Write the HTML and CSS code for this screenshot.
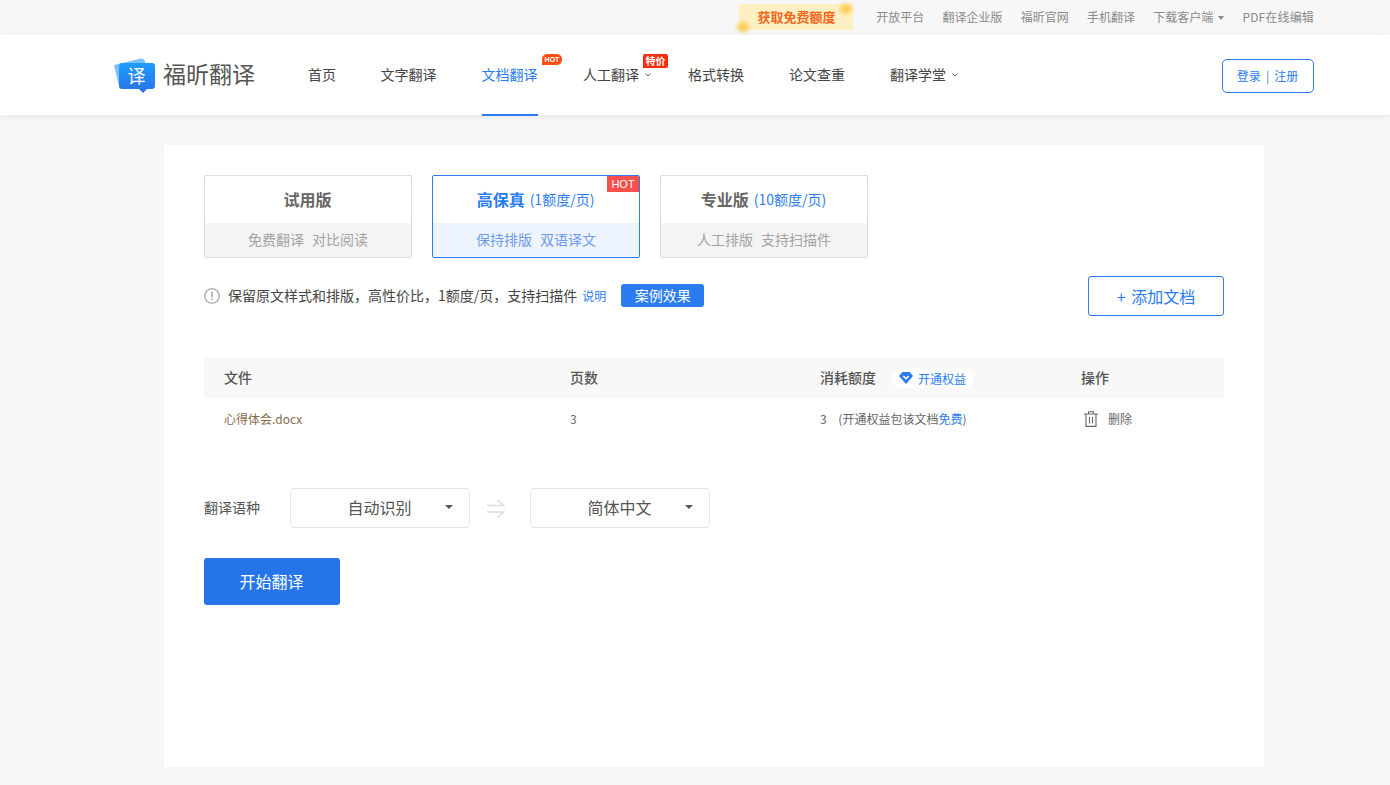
FILE: index.html
```html
<!DOCTYPE html>
<html lang="zh-CN">
<head>
<meta charset="utf-8">
<title>福昕翻译</title>
<link rel="stylesheet" href="styles.css">
</head>
<body>
<div class="topbar">
  <div class="promo"><span class="blob blob-a"></span><span class="blob blob-b"></span><span class="promo-text">获取免费额度</span></div>
  <a class="toplink">开放平台</a>
  <a class="toplink">翻译企业版</a>
  <a class="toplink">福昕官网</a>
  <a class="toplink">手机翻译</a>
  <a class="toplink">下载客户端<i class="caret-small"></i></a>
  <a class="toplink pdf">PDF在线编辑</a>
</div>
<header class="header">
  <div class="logo">
    <svg class="logo-icon" width="44" height="36" viewBox="0 0 44 36">
      <defs><linearGradient id="lg" x1="0" y1="0" x2="0" y2="1"><stop offset="0" stop-color="#1f9bfb"/><stop offset="1" stop-color="#2a72ea"/></linearGradient></defs>
      <path d="M1 8 L28 1.500 Q31 1 32 4 L34 24 L9 30 Q6 30.500 5.500 27 Z" fill="#7cc0fb"/>
      <path d="M9 6 H39 Q42 6 42 9 V29 Q42 32 39 32 H34 L30 36 L26 32 H9 Q6 32 6 29 V9 Q6 6 9 6 Z" fill="url(#lg)"/>
      <text x="23.500" y="25.500" text-anchor="middle" class="logo-char">译</text>
    </svg>
    <span class="logo-text">福昕翻译</span>
  </div>
  <nav class="nav">
    <a class="nav-item first">首页</a>
    <a class="nav-item">文字翻译</a>
    <a class="nav-item active">文档翻译<span class="tag tag-hot">HOT</span></a>
    <a class="nav-item has-arrow">人工翻译<span class="tag tag-sale">特价</span><svg class="chev" width="6" height="4" viewBox="0 0 6 4"><path d="M.5.5 3 3 5.500.5" fill="none" stroke="#555" stroke-width=".9"/></svg></a>
    <a class="nav-item">格式转换</a>
    <a class="nav-item">论文查重</a>
    <a class="nav-item has-arrow">翻译学堂<svg class="chev" width="6" height="4" viewBox="0 0 6 4"><path d="M.5.5 3 3 5.500.5" fill="none" stroke="#555" stroke-width=".9"/></svg></a>
  </nav>
  <button class="login">登录<span class="login-sep">|</span>注册</button>
</header>
<main class="card">
  <div class="plans">
    <div class="plan">
      <div class="plan-head"><b>试用版</b></div>
      <div class="plan-foot"><span>免费翻译</span><span>对比阅读</span></div>
    </div>
    <div class="plan selected">
      <div class="plan-head"><b>高保真</b><em>(1额度/页)</em></div>
      <div class="plan-foot"><span>保持排版</span><span>双语译文</span></div>
      <span class="plan-hot">HOT</span>
    </div>
    <div class="plan">
      <div class="plan-head"><b>专业版</b><em>(10额度/页)</em></div>
      <div class="plan-foot"><span>人工排版</span><span>支持扫描件</span></div>
    </div>
  </div>
  <div class="info-row">
    <div class="info">
      <svg class="info-icon" width="16" height="16" viewBox="0 0 16 16"><circle cx="8" cy="8" r="7.300" fill="none" stroke="#999" stroke-width="1.100"/><path d="M8 3.800V9.200M8 10.600V12" stroke="#999" stroke-width="1.400" fill="none"/></svg>
      <span class="info-text">保留原文样式和排版，高性价比，1额度/页，支持扫描件</span>
      <a class="info-link">说明</a>
      <span class="case-btn">案例效果</span>
    </div>
    <button class="add-btn">+ 添加文档</button>
  </div>
  <div class="table">
    <div class="tr thead">
      <div>文件</div>
      <div>页数</div>
      <div class="cost-head">消耗额度<span class="perk"><svg width="14" height="12" viewBox="0 0 14 12"><path d="M3.300 0H10.700L14 4 7 12 0 4Z" fill="#2a7cf0"/><path d="M4.300 4 7 6.600 9.700 4" fill="none" stroke="#fff" stroke-width="1.500"/></svg>开通权益</span></div>
      <div>操作</div>
    </div>
    <div class="tr tbody">
      <div class="filename">心得体会.docx</div>
      <div>3</div>
      <div>3 <span class="note">(开通权益包该文档<span class="blue">免费</span>)</span></div>
      <div class="op"><svg class="trash" width="14" height="16" viewBox="0 0 14 16"><path d="M0 3H14M4.500 3V.7H9.500V3M2 3V15.400H12V3M5.500 6V12.500M8.500 6V12.500" fill="none" stroke="#666" stroke-width="1.100"/></svg><span>删除</span></div>
    </div>
  </div>
  <div class="lang-row">
    <span class="lang-label">翻译语种</span>
    <div class="select"><span>自动识别</span><i class="caret"></i></div>
    <svg class="swap" width="20" height="20" viewBox="0 0 20 20"><path d="M2 7.500H18.500L12.500 2M2 14H18.500L12.500 19.500" fill="none" stroke="#ddd" stroke-width="1.500"/></svg>
    <div class="select"><span>简体中文</span><i class="caret"></i></div>
  </div>
  <button class="start">开始翻译</button>
</main>
</body>
</html>
```
FILE: styles.css
```css
* { box-sizing: border-box; }
html, body { margin: 0; padding: 0; }
body {
  width: 1390px;
  height: 785px;
  overflow: hidden;
  background: #f7f7f7;
  color: #333;
  font-family: "Noto Sans CJK SC", "Noto Sans", sans-serif;
}
a { color: inherit; text-decoration: none; }
button { font-family: inherit; cursor: pointer; background: #fff; }

.topbar {
  height: 35px;
  display: flex;
  align-items: center;
  justify-content: flex-end;
  gap: 18.250px;
  padding: 0 76px 0 0;
  font-size: 12px;
  color: #8a8a8a;
}
.toplink { line-height: 34px; height: 35px; white-space: nowrap; }
.pdf { letter-spacing: .15px; }
.promo {
  position: relative;
  width: 114px;
  height: 26px;
  margin: 4px 4.500px 0 0;
  background: #fff0c4;
  display: flex;
  align-items: center;
  justify-content: center;
  align-self: flex-start;
}
.promo-text { position: relative; color: #f5661d; font-size: 13px; font-weight: 700; line-height: 26px; }
.blob { position: absolute; width: 12px; height: 10px; border-radius: 50%; background: #fbcd55; filter: blur(2px); }
.blob-a { left: -2px; bottom: -2px; }
.blob-b { right: 1px; top: 0; }
.caret-small {
  display: inline-block;
  margin-left: 5px;
  vertical-align: 2px;
  border: 3px solid transparent;
  border-top: 4px solid #8a8a8a;
  border-bottom: 0;
}

.header {
  height: 80px;
  background: #fff;
  display: flex;
  align-items: center;
  padding: 0 76px 0 114px;
  box-shadow: 0 2px 8px rgba(0, 0, 0, .06);
  position: relative;
}
.logo { display: flex; align-items: center; width: 194px; flex: none; }
.logo-icon { flex: none; margin: 0 6px 0 -1px; }
.logo-char { font-size: 18px; fill: #fff; font-family: "Noto Sans CJK SC", sans-serif; }
.logo-text { font-size: 23px; color: #555; line-height: 30px; padding-bottom: 4px; white-space: nowrap; }
.nav { display: flex; gap: 45px; flex: 1; height: 80px; }
.nav-item {
  position: relative;
  display: block;
  font-size: 14px;
  line-height: 78px;
  color: #444;
  white-space: nowrap;
}
.nav-item.first { margin-right: -.5px; }
.nav-item.active { color: #2a7cf0; margin-right: .5px; }
.nav-item.active::after {
  content: "";
  position: absolute;
  left: 0;
  right: 0;
  bottom: -1px;
  height: 2px;
  background: #2a7cf0;
}
.nav-item.has-arrow { padding-right: 12px; margin-right: -8px; }
.chev { position: absolute; right: 0; top: 38px; }
.tag {
  position: absolute;
  color: #fff;
  background: #ff4f15;
  line-height: 1;
  white-space: nowrap;
}
.tag-hot {
  left: 60.500px;
  top: 19px;
  width: 20px;
  height: 11px;
  font-size: 7px;
  line-height: 11px;
  text-align: center;
  border-radius: 5px 5px 5px 0;
  font-family: "Liberation Sans", sans-serif;
  font-weight: 700;
}
.tag-sale {
  left: 60px;
  top: 19px;
  width: 25px;
  height: 14px;
  font-size: 10px;
  font-weight: 700;
  line-height: 13px;
  text-align: center;
  border-radius: 2px 2px 2px 0;
  background: #f52d10;
}
.login {
  width: 92px;
  height: 34px;
  border: 1px solid #2a7cf0;
  border-radius: 5px;
  color: #2a7cf0;
  font-size: 12px;
  padding: 0 1px 2px 0;
  margin-top: 2px;
}
.login-sep { margin: 0 5px; }

.card {
  width: 1100px;
  height: 622px;
  margin: 30px 0 0 164px;
  background: #fff;
  padding: 30px 40px;
}
.plans { display: flex; gap: 20px; }
.plan {
  position: relative;
  width: 208px;
  height: 83px;
  border: 1px solid #ddd;
  border-radius: 2px;
  overflow: hidden;
}
.plan-head {
  height: 47px;
  display: flex;
  align-items: center;
  justify-content: center;
  gap: 5px;
  padding: 0 1px 2px 0;
  color: #666;
}
.plan-head b { font-size: 16px; font-weight: 700; }
.plan-head em { font-style: normal; font-size: 14px; color: #2a7cf0; }
.plan-foot {
  height: 34px;
  background: #f4f4f4;
  display: flex;
  align-items: center;
  justify-content: center;
  gap: 8px;
  padding-bottom: 3px;
  font-size: 14px;
  color: #a3a3a3;
}
.plan.selected { border-color: #2a7cf0; }
.plan.selected .plan-head { color: #2a7cf0; }
.plan.selected .plan-foot { background: #edf4fd; color: #6d9bea; }
.plan-hot {
  position: absolute;
  right: 0;
  top: 0;
  width: 32px;
  height: 16px;
  background: #f9504b;
  color: #fff;
  font-size: 11px;
  line-height: 16px;
  text-align: center;
  font-family: "Liberation Sans", sans-serif;
}

.info-row {
  display: flex;
  justify-content: space-between;
  align-items: flex-start;
  margin-top: 18px;
  height: 40px;
}
.info { display: flex; align-items: center; height: 23px; margin-top: 8px; }
.info-icon { flex: none; }
.info-text { margin-left: 8px; padding-bottom: 2px; font-size: 14px; color: #444; white-space: nowrap; }
.info-link { margin-left: 5px; padding-bottom: 1px; font-size: 12px; color: #2a7cf0; }
.case-btn {
  margin-left: 15px;
  width: 83px;
  height: 23px;
  border-radius: 3px;
  background: #2a7cf0;
  color: #fff;
  font-size: 14px;
  line-height: 22px;
  text-align: center;
}
.add-btn {
  width: 136px;
  height: 40px;
  border: 1px solid #2a7cf0;
  border-radius: 3px;
  color: #2a7cf0;
  font-size: 16px;
  word-spacing: 2px;
  padding: 0;
}

.table { margin-top: 42px; }
.tr {
  display: grid;
  grid-template-columns: 346px 250px 261px 1fr;
  padding-left: 20px;
  align-items: center;
}
.thead {
  height: 40px;
  padding-bottom: 3px;
  background: #f8f8f8;
  font-size: 14px;
  font-weight: 500;
  color: #555;
}
.tbody { height: 40px; font-size: 12px; color: #666; }
.filename { color: #8a6a4a; }
.cost-head { display: flex; align-items: center; }
.perk {
  display: flex;
  align-items: center;
  gap: 5px;
  margin: 3px 0 0 15px;
  height: 20px;
  padding: 0 8px;
  border-radius: 10px;
  background: #fff;
  color: #2a7cf0;
  font-size: 12px;
  font-weight: 400;
}
.note { margin-left: 9px; }
.blue { color: #2a7cf0; }
.op { display: flex; align-items: center; gap: 10px; padding-left: 3px; }
.trash { margin-top: 1px; }

.lang-row { display: flex; align-items: center; margin-top: 50px; height: 40px; }
.lang-label { width: 86px; font-size: 14px; color: #555; padding-bottom: 2px; }
.select {
  position: relative;
  width: 180px;
  height: 40px;
  border: 1px solid #e6e6e6;
  border-radius: 4px;
  padding-right: 1px;
  font-size: 16px;
  line-height: 36px;
  color: #555;
  text-align: center;
}
.caret {
  position: absolute;
  right: 16px;
  top: 16px;
  border: 4px solid transparent;
  border-top: 4px solid #555;
  border-bottom: 0;
}
.swap { margin: 0 25px 0 15px; flex: none; }
.start {
  display: block;
  margin-top: 30px;
  width: 136px;
  height: 47px;
  border: 0;
  border-radius: 3px;
  background: #2574ea;
  color: #fff;
  font-size: 16px;
  padding: 0 1px 2px 0;
}
```
